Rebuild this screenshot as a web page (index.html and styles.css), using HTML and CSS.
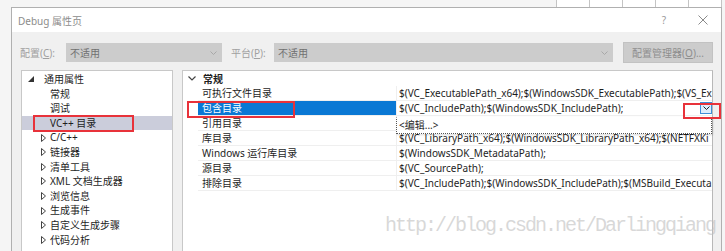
FILE: index.html
```html
<!DOCTYPE html>
<html lang="zh-CN">
<head>
  <meta charset="UTF-8">
  <meta name="viewport" content="width=device-width, initial-scale=1.0">
  <link rel="stylesheet" href="styles.css">
</head>
<body>

<div class="desk">
  <div class="behind">
    <span></span><span></span><span></span><span></span><span></span>
  </div>

  <div class="window">
    <div class="titlebar">
      <span class="title">Debug 属性页</span>
      <span class="help">?</span>
      <svg class="close" width="10" height="10" viewBox="0 0 10 10">
        <path d="M0.5 0.5 L9.5 9.5 M9.5 0.5 L0.5 9.5" stroke="#8a8a8a" stroke-width="1" fill="none"/>
      </svg>
    </div>

    <div class="toolbar">
      <span class="label">配置(<u>C</u>):</span>
      <div class="combo combo-config">
        <span>不适用</span>
        <svg width="7" height="4" viewBox="0 0 7 4"><path d="M0.5 0.5 L3.5 3.5 L6.5 0.5" stroke="#a8a8a8" fill="none"/></svg>
      </div>
      <span class="label label-platform">平台(<u>P</u>):</span>
      <div class="combo combo-platform">
        <span>不适用</span>
        <svg width="7" height="4" viewBox="0 0 7 4"><path d="M0.5 0.5 L3.5 3.5 L6.5 0.5" stroke="#a8a8a8" fill="none"/></svg>
      </div>
      <div class="btn">配置管理器(<u>O</u>)...</div>
    </div>

    <div class="main">
      <div class="tree">
        <div class="node root">
          <svg class="arrow" width="6" height="6" viewBox="0 0 6 6"><path d="M6 0 L6 6 L0 6 Z" fill="#333"/></svg>
          <span>通用属性</span>
        </div>
        <div class="node leaf">常规</div>
        <div class="node leaf">调试</div>
        <div class="node leaf active">VC++ 目录<i class="mark mark-tree"></i></div>
        <div class="node branch"><svg class="arrow" width="5" height="8" viewBox="0 0 5 8"><path d="M0.5 0.5 L4.5 4 L0.5 7.5 Z" stroke="#444" fill="none"/></svg>C/C++</div>
        <div class="node branch"><svg class="arrow" width="5" height="8" viewBox="0 0 5 8"><path d="M0.5 0.5 L4.5 4 L0.5 7.5 Z" stroke="#444" fill="none"/></svg>链接器</div>
        <div class="node branch"><svg class="arrow" width="5" height="8" viewBox="0 0 5 8"><path d="M0.5 0.5 L4.5 4 L0.5 7.5 Z" stroke="#444" fill="none"/></svg>清单工具</div>
        <div class="node branch"><svg class="arrow" width="5" height="8" viewBox="0 0 5 8"><path d="M0.5 0.5 L4.5 4 L0.5 7.5 Z" stroke="#444" fill="none"/></svg>XML 文档生成器</div>
        <div class="node branch"><svg class="arrow" width="5" height="8" viewBox="0 0 5 8"><path d="M0.5 0.5 L4.5 4 L0.5 7.5 Z" stroke="#444" fill="none"/></svg>浏览信息</div>
        <div class="node branch"><svg class="arrow" width="5" height="8" viewBox="0 0 5 8"><path d="M0.5 0.5 L4.5 4 L0.5 7.5 Z" stroke="#444" fill="none"/></svg>生成事件</div>
        <div class="node branch"><svg class="arrow" width="5" height="8" viewBox="0 0 5 8"><path d="M0.5 0.5 L4.5 4 L0.5 7.5 Z" stroke="#444" fill="none"/></svg>自定义生成步骤</div>
        <div class="node branch"><svg class="arrow" width="5" height="8" viewBox="0 0 5 8"><path d="M0.5 0.5 L4.5 4 L0.5 7.5 Z" stroke="#444" fill="none"/></svg>代码分析</div>
      </div>

      <div class="grid">
        <div class="group">
          <svg class="chev" width="8" height="5" viewBox="0 0 8 5"><path d="M0.5 0.5 L4 4 L7.5 0.5" stroke="#444" fill="none" stroke-width="1.2"/></svg>
          <span>常规</span>
        </div>
        <div class="prop">
          <div class="name">可执行文件目录</div>
          <div class="value"><span>$(VC_ExecutablePath_x64);$(WindowsSDK_ExecutablePath);$(VS_Ex</span></div>
        </div>
        <div class="prop selected">
          <div class="name">包含目录</div>
          <div class="value"><span>$(VC_IncludePath);$(WindowsSDK_IncludePath);</span>
            <div class="drop">
              <svg width="7" height="4" viewBox="0 0 7 4"><path d="M0.5 0.5 L3.5 3.5 L6.5 0.5" stroke="#222" fill="none"/></svg>
            </div>
          </div>
          <i class="mark mark-name"></i>
          <i class="mark mark-drop"></i>
          <div class="popup">&lt;编辑...&gt;</div>
        </div>
        <div class="prop">
          <div class="name">引用目录</div>
          <div class="value"></div>
        </div>
        <div class="prop">
          <div class="name">库目录</div>
          <div class="value"><span>$(VC_LibraryPath_x64);$(WindowsSDK_LibraryPath_x64);$(NETFXKi</span></div>
        </div>
        <div class="prop">
          <div class="name">Windows 运行库目录</div>
          <div class="value"><span>$(WindowsSDK_MetadataPath);</span></div>
        </div>
        <div class="prop">
          <div class="name">源目录</div>
          <div class="value"><span>$(VC_SourcePath);</span></div>
        </div>
        <div class="prop">
          <div class="name">排除目录</div>
          <div class="value"><span>$(VC_IncludePath);$(WindowsSDK_IncludePath);$(MSBuild_Executa</span></div>
        </div>
      </div>
    </div>
  </div>

  <div class="watermark">http://blog.csdn.net/Darlingqiang</div>
</div>

</body>
</html>
```

FILE: styles.css
```css
body {
  margin: 0;
  background-color: #f5f5f5;
  font-family: "Noto Sans", "Noto Sans CJK SC", sans-serif;
  font-size: 10px;
  color: #1e1e1e;
  overflow: hidden;
}

.desk {
  position: relative;
  width: 725px;
  height: 251px;
  overflow: hidden;
}

/* window behind the dialog, top right */
.behind {
  display: flex;
  justify-content: flex-end;
  height: 7px;
  padding-right: 3px;
}

.behind span {
  width: 32px;
  height: 7px;
  background-color: #fff;
  border-left: 1px solid #c4c4c4;
}

.behind span:last-child {
  border-right: 1px solid #c4c4c4;
}

.window {
  margin-left: 11px;
  width: 709px;
  height: 260px;
  border: 1px solid #b0b0b0;
  background-color: #f0f0f0;
}

.titlebar {
  display: flex;
  align-items: center;
  height: 24px;
  background-color: #fff;
  padding-left: 6px;
}

.title {
  color: #8c8c8c;
  font-size: 10px;
  flex: 1;
}

.help {
  color: #9a9a9a;
  font-size: 10px;
  margin-right: 32px;
}

.close {
  margin-right: 13px;
}

.toolbar {
  display: flex;
  align-items: center;
  height: 21px;
  padding: 10px 0 7px 8px;
}

.label {
  color: #a0a0a0;
  width: 46px;
}

.label-platform {
  margin-left: 9px;
  width: 43px;
}

.combo {
  display: flex;
  align-items: center;
  justify-content: space-between;
  height: 19px;
  padding: 0 5px 0 4px;
  background-color: #cccccc;
  color: #707070;
  box-sizing: border-box;
}

.combo-config {
  width: 156px;
}

.combo-platform {
  width: 339px;
}

.btn {
  margin-left: 10px;
  width: 90px;
  height: 21px;
  line-height: 20px;
  box-sizing: border-box;
  text-align: center;
  background-color: #cccccc;
  border: 1px solid #c2c2c2;
  color: #8e8e8e;
}

.main {
  display: flex;
  gap: 9px;
  padding: 0 8px 0 9px;
}

.tree {
  position: relative;
  flex-shrink: 0;
  width: 150px;
  height: 200px;
  background-color: #fff;
  border: 1px solid #c8c8c8;
  padding-top: 1px;
}

.node {
  position: relative;
  display: flex;
  align-items: center;
  height: 14.6px;
  line-height: 14.6px;
  white-space: nowrap;
}

.root {
  padding-left: 6px;
}

.root .arrow {
  margin-right: 10px;
}

.leaf {
  padding-left: 28px;
}

.branch {
  padding-left: 19px;
}

.branch .arrow {
  margin-right: 4px;
}

.active {
  background-color: #cbcddb;
}

.mark {
  position: absolute;
  border: 2px solid #e8323a;
  box-sizing: border-box;
}

.mark-tree {
  left: 11px;
  top: -1px;
  width: 101px;
  height: 17px;
}

.grid {
  flex: 1;
  min-width: 0;
  height: 200px;
  background-color: #fff;
  border: 1px solid #c8c8c8;
  border-right-color: #b8b8b8;
}

.group {
  display: flex;
  align-items: center;
  height: 15px;
  padding-left: 5px;
  font-weight: bold;
}

.chev {
  margin-right: 7px;
}

.prop {
  position: relative;
  display: flex;
  height: 15px;
  margin-left: 15px;
}

.name {
  flex-shrink: 0;
  width: 194px;
  padding-left: 4px;
  line-height: 14px;
  border-bottom: 1px solid #efefef;
  border-right: 1px solid #efefef;
  white-space: nowrap;
}

.value {
  position: relative;
  flex: 1;
  min-width: 0;
  display: flex;
  align-items: center;
  padding-left: 2px;
  border-bottom: 1px solid #efefef;
  overflow: hidden;
  white-space: nowrap;
}

.value span {
  overflow: hidden;
}

.selected .name {
  background-color: #0a78d4;
  color: #fff;
}

.drop {
  position: absolute;
  right: 0;
  top: 1px;
  width: 12px;
  height: 12px;
  display: flex;
  align-items: center;
  justify-content: center;
  background-color: #dcecfc;
  border: 1px solid #3d8ed8;
  box-sizing: border-box;
}

.mark-name {
  left: -11px;
  top: 0;
  width: 108px;
  height: 17px;
  z-index: 2;
}

.mark-drop {
  right: -9px;
  top: 2px;
  width: 38px;
  height: 16px;
  z-index: 2;
}

.popup {
  position: absolute;
  z-index: 1;
  left: 198px;
  right: 0;
  top: 16px;
  height: 17px;
  line-height: 15px;
  padding-left: 2px;
  box-sizing: border-box;
  background-color: #fff;
  border: 1px dotted #555;
  border-top-color: #fff;
  box-shadow: 1px 1px 2px rgba(0, 0, 0, 0.15);
}

.watermark {
  position: absolute;
  left: 385px;
  top: 214px;
  font-family: "Liberation Mono", monospace;
  font-size: 20px;
  letter-spacing: -2px;
  color: rgba(190, 190, 190, 0.6);
  white-space: nowrap;
}
```
